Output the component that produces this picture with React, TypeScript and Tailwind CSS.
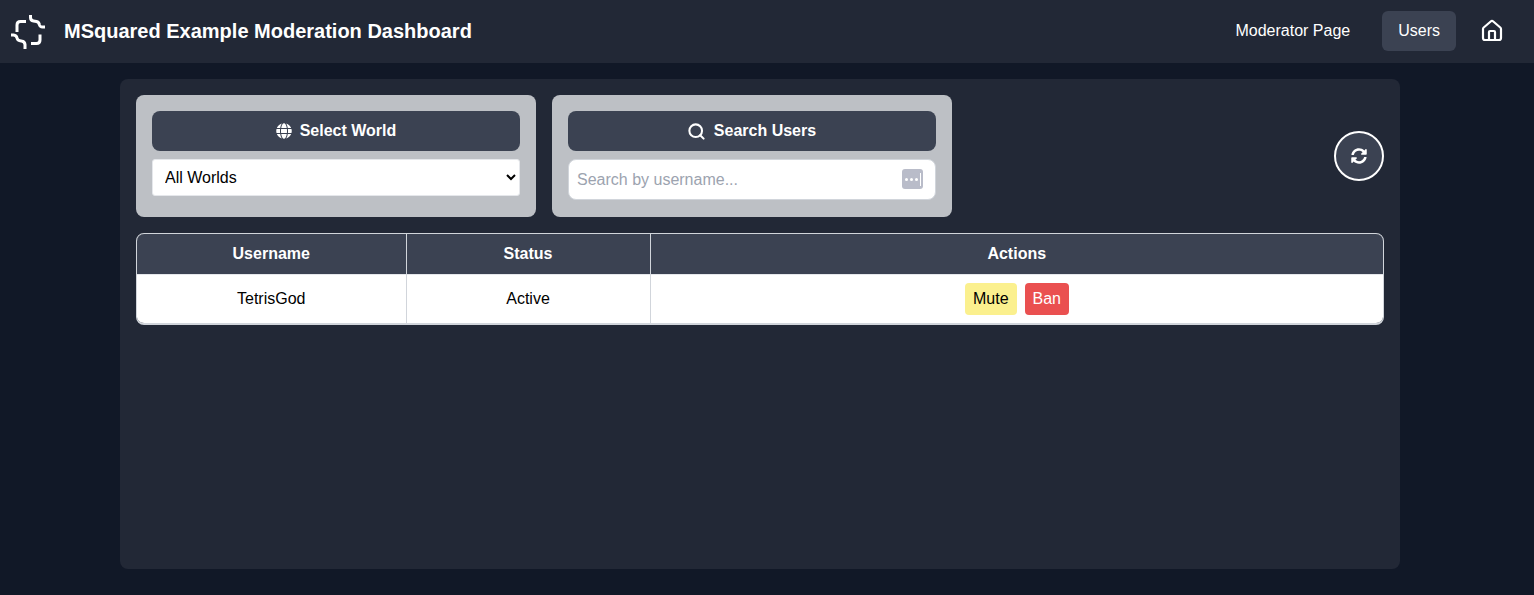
import { House, Search } from "lucide-react";
import { FaGlobe, FaSyncAlt } from "react-icons/fa";

const Logo = () => (
  <svg width="36" height="37" viewBox="10 12 36 37" fill="none" stroke="white" strokeWidth="3">
    <path d="M17 31V24Q17 20.5 20.5 20.5H26" />
    <path d="M30.5 14V16.5Q30.5 19.5 33.5 20L36.5 20.5Q39 21 39.5 24Q40 26 42.5 26H45" />
    <path d="M40 33.5V39Q40 42.5 36.5 42.5H31" />
    <path d="M11 34H13.5Q16.5 34.3 17 37Q17.5 39.5 20 39.7L21.5 40Q24.7 40.5 25 43.5V48" />
  </svg>
);

const PasswordIcon = () => (
  <div className="absolute right-[13px] top-[10px] flex h-[20px] w-[21px] items-center justify-center gap-[2px] rounded-[3px] bg-[#b9bcc9]">
    <span className="h-[3px] w-[3px] rounded-full bg-white" />
    <span className="h-[3px] w-[3px] rounded-full bg-white" />
    <span className="h-[3px] w-[3px] rounded-full bg-white" />
    <span className="h-[13px] w-[1px] bg-white" />
  </div>
);

const CardHeading = ({ icon, label }: { icon: React.ReactNode; label: string }) => (
  <div className="flex h-[40px] items-center justify-center gap-2 rounded-lg bg-[#3b4252] font-bold text-white">
    {icon}
    <span>{label}</span>
  </div>
);

const App = () => {
  return (
    <div className="flex min-h-[595px] flex-col bg-[#111827] font-['Liberation_Sans',Arial,sans-serif] text-base text-black">
      <header className="flex h-[63px] items-center justify-between bg-[#222836] pb-[1px] pl-[10px] pr-[30px] text-white">
        <div className="flex items-center gap-[18px]">
          <Logo />
          <h1 className="text-[20px] font-bold">MSquared Example Moderation Dashboard</h1>
        </div>
        <nav className="flex items-center gap-4">
          <a className="px-4 py-2">Moderator Page</a>
          <a className="flex h-[40px] items-center rounded-md bg-[#3b4252] px-4">Users</a>
          <House size={24} strokeWidth={2.2} className="ml-2" />
        </nav>
      </header>

      <main className="mb-[26px] ml-[120px] mt-4 w-[1280px] flex-1 rounded-lg bg-[#222836] p-4">
        <div className="flex items-center gap-4">
          <section className="flex h-[122px] w-[400px] flex-col gap-2 rounded-lg bg-[#bdc0c5] p-4">
            <CardHeading icon={<FaGlobe size={16} />} label="Select World" />
            <select className="h-[37px] rounded-[3px] border border-[#e5e7eb] bg-white pl-2 text-black">
              <option>All Worlds</option>
            </select>
          </section>

          <section className="flex h-[122px] w-[400px] flex-col gap-2 rounded-lg bg-[#bdc0c5] p-4">
            <CardHeading icon={<Search size={19} strokeWidth={2.6} className="-m-[0.5px]" />} label="Search Users" />
            <div className="relative">
              <input
                placeholder="Search by username..."
                className="h-[41px] w-full rounded-lg border border-[#d1d5db] bg-white px-2 placeholder:text-[#9ca3af]"
              />
              <PasswordIcon />
            </div>
          </section>

          <button className="ml-auto flex h-[50px] w-[50px] items-center justify-center rounded-full border-2 border-white bg-[#3b4252] text-white">
            <FaSyncAlt size={16} />
          </button>
        </div>

        <div className="mt-4 overflow-hidden rounded-lg border border-b-2 border-[#d1d5db]">
          <table className="w-full table-fixed border-collapse bg-white text-center">
            <thead className="bg-[#3b4252] font-bold text-white">
              <tr className="h-[40px] border-b border-[#e5e7eb]">
                <th className="w-[269px] border-r border-[#d1d5db]">Username</th>
                <th className="w-[244px] border-r border-[#d1d5db]">Status</th>
                <th>Actions</th>
              </tr>
            </thead>
            <tbody>
              <tr className="h-[49px]">
                <td className="border-r border-[#d1d5db]">TetrisGod</td>
                <td className="border-r border-[#d1d5db]">Active</td>
                <td>
                  <div className="flex items-center justify-center gap-2">
                    <button className="h-[32px] w-[52px] rounded bg-[#fbf08e]">Mute</button>
                    <button className="h-[32px] w-[44px] rounded bg-[#ea5050] text-white">Ban</button>
                  </div>
                </td>
              </tr>
            </tbody>
          </table>
        </div>
      </main>
    </div>
  );
};

export default App;
